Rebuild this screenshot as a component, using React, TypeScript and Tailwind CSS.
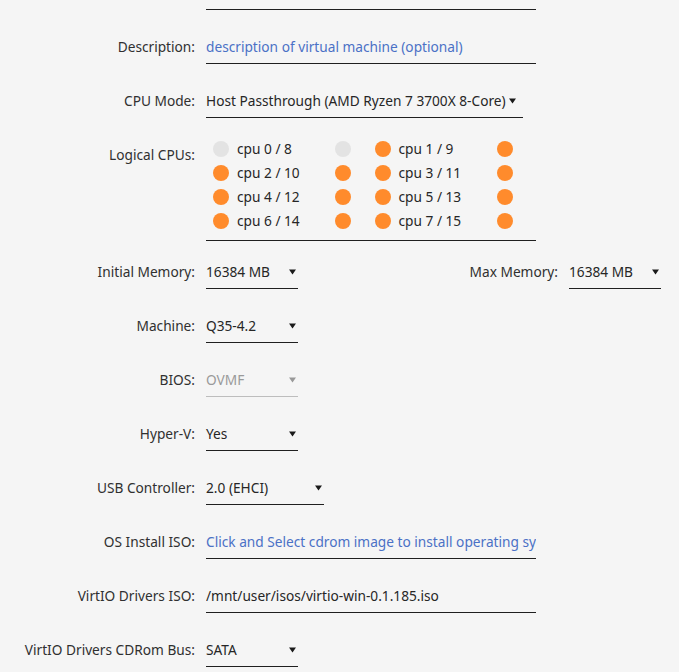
import React from "react";

const labelCls = "w-[195px] shrink-0 text-right leading-5 text-[#303030]";

function Arrow({ muted }: { muted?: boolean }) {
  return (
    <svg width="7" height="6" viewBox="0 0 7 6" className="shrink-0">
      <path d="M0 0.5 H7 L3.5 5.5 Z" fill={muted ? "#999999" : "#1a1a1a"} />
    </svg>
  );
}

function Row({
  label,
  children,
  className = "",
  labelClass = "",
}: {
  label: string;
  children: React.ReactNode;
  className?: string;
  labelClass?: string;
}) {
  return (
    <div className={`flex items-start ${className}`}>
      <div className={`${labelCls} ${labelClass}`}>{label}</div>
      <div className="ml-[11px]">{children}</div>
    </div>
  );
}

function TextField({ value, placeholder }: { value?: string; placeholder?: boolean }) {
  return (
    <div
      className={`w-[330px] overflow-hidden whitespace-nowrap leading-5 pb-[6px] border-b border-[#1f1f1f] ${
        placeholder ? "text-[#4b71c6]" : "text-[#262626]"
      }`}
    >
      {value}
    </div>
  );
}

function Select({
  value,
  width,
  muted,
  tight,
}: {
  value: string;
  width: string;
  muted?: boolean;
  tight?: boolean;
}) {
  return (
    <div
      className={`${width} flex items-center leading-5 pb-[6px] border-b ${
        muted ? "border-[#bdbdbd] text-[#9a9a9a]" : "border-[#1f1f1f] text-[#262626]"
      } ${tight ? "gap-[3px]" : "justify-between pr-[2px]"}`}
    >
      <span className="whitespace-nowrap">{value}</span>
      <span className="flex h-5 items-center">
        <Arrow muted={muted} />
      </span>
    </div>
  );
}

function Dot({ on }: { on: boolean }) {
  return (
    <span
      className={`block h-4 w-4 shrink-0 rounded-full ${on ? "bg-[#ff8b2c]" : "bg-[#e3e3e3]"}`}
    />
  );
}

const cpus = [
  { label: "cpu 0 / 8", a: false, b: false },
  { label: "cpu 1 / 9", a: true, b: true },
  { label: "cpu 2 / 10", a: true, b: true },
  { label: "cpu 3 / 11", a: true, b: true },
  { label: "cpu 4 / 12", a: true, b: true },
  { label: "cpu 5 / 13", a: true, b: true },
  { label: "cpu 6 / 14", a: true, b: true },
  { label: "cpu 7 / 15", a: true, b: true },
];

export default function App() {
  return (
    <div
      className="min-h-[672px] w-[679px] overflow-hidden bg-[#f5f5f5] text-[13.7px] text-[#262626]"
      style={{ fontFamily: "'Noto Sans', 'DejaVu Sans', sans-serif" }}
    >
      {/* bottom edge of the Name field above */}
      <div className="ml-[206px] h-[10px] w-[330px] border-b border-[#1f1f1f]" />

      <Row label="Description:" className="mt-[27px]">
        <TextField value="description of virtual machine (optional)" placeholder />
      </Row>

      <Row label="CPU Mode:" className="mt-[27px]">
        <Select value="Host Passthrough (AMD Ryzen 7 3700X 8-Core)" width="w-[317px]" tight />
      </Row>

      <Row label="Logical CPUs:" className="mt-[19px]" labelClass="pt-[8px]">
        <div className="w-[330px] border-b border-[#1f1f1f] pb-[7px]">
          <div className="grid grid-cols-2 pl-[7px]">
            {cpus.map((c) => (
              <div key={c.label} className="flex h-6 items-center">
                <Dot on={c.a} />
                <span className="ml-2 w-[98px] leading-5">{c.label}</span>
                <Dot on={c.b} />
              </div>
            ))}
          </div>
        </div>
      </Row>

      <div className="mt-[21px] flex items-start">
        <Row label="Initial Memory:">
          <Select value="16384 MB" width="w-[92px]" />
        </Row>
        <div className="w-[260px] shrink-0 text-right leading-5 text-[#303030]">Max Memory:</div>
        <div className="ml-[11px]">
          <Select value="16384 MB" width="w-[92px]" />
        </div>
      </div>

      <Row label="Machine:" className="mt-[27px]">
        <Select value="Q35-4.2" width="w-[92px]" />
      </Row>

      <Row label="BIOS:" className="mt-[27px]">
        <Select value="OVMF" width="w-[92px]" muted />
      </Row>

      <Row label="Hyper-V:" className="mt-[27px]">
        <Select value="Yes" width="w-[92px]" />
      </Row>

      <Row label="USB Controller:" className="mt-[27px]">
        <Select value="2.0 (EHCI)" width="w-[118px]" />
      </Row>

      <Row label="OS Install ISO:" className="mt-[27px]">
        <TextField value="Click and Select cdrom image to install operating system" placeholder />
      </Row>

      <Row label="VirtIO Drivers ISO:" className="mt-[27px]">
        <TextField value="/mnt/user/isos/virtio-win-0.1.185.iso" />
      </Row>

      <Row label="VirtIO Drivers CDRom Bus:" className="mt-[27px]">
        <Select value="SATA" width="w-[92px]" />
      </Row>
    </div>
  );
}
